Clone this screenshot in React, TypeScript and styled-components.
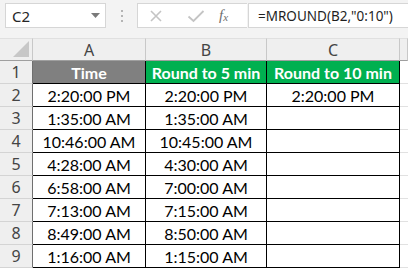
import React from 'react';
import styled, {createGlobalStyle} from "styled-components";

const GlobalStyle = createGlobalStyle`
    html, body {
        margin: 0;
        padding: 0;
        background: #ffffff;
        overflow: hidden;
    }
`

type Row = {
    time: string
    five: string
    ten: string
}

const rows: Row[] = [
    {time: '2:20:00 PM', five: '2:20:00 PM', ten: '2:20:00 PM'},
    {time: '1:35:00 AM', five: '1:35:00 AM', ten: ''},
    {time: '10:46:00 AM', five: '10:45:00 AM', ten: ''},
    {time: '4:28:00 AM', five: '4:30:00 AM', ten: ''},
    {time: '6:58:00 AM', five: '7:00:00 AM', ten: ''},
    {time: '7:13:00 AM', five: '7:15:00 AM', ten: ''},
    {time: '8:49:00 AM', five: '8:50:00 AM', ten: ''},
    {time: '1:16:00 AM', five: '1:15:00 AM', ten: ''},
]

export default function App() {
    return (
        <Sheet>
            <GlobalStyle/>
            <Toolbar>
                <NameBox>
                    <span>C2</span>
                    <svg width="9" height="5" viewBox="0 0 9 5">
                        <path d="M0 0 L9 0 L4.5 5 Z" fill="#7a7a7a"/>
                    </svg>
                </NameBox>
                <Grip>
                    <i/><i/><i/>
                </Grip>
                <Controls>
                    <svg width="14" height="14" viewBox="0 0 14 14">
                        <path d="M2 2 L12 12 M12 2 L2 12" stroke="#c4c4c4" strokeWidth="1.6"/>
                    </svg>
                    <svg width="18" height="14" viewBox="0 0 18 14">
                        <path d="M1.5 7.5 L6.5 12 L16.5 2" stroke="#c4c4c4" strokeWidth="1.8" fill="none"/>
                    </svg>
                    <Fx>f<sub>x</sub></Fx>
                </Controls>
                <FormulaInput>=MROUND(B2,"0:10")</FormulaInput>
            </Toolbar>
            <Grid>
                <Corner>
                    <svg width="16" height="16" viewBox="0 0 16 16">
                        <path d="M16 0 L16 16 L0 16 Z" fill="#c7c7c7"/>
                    </svg>
                </Corner>
                <ColHead>A</ColHead>
                <ColHead>B</ColHead>
                <ColHead>C</ColHead>
                <ColHead/>

                <RowHead>1</RowHead>
                <HeadCell $bg="#808080">Time</HeadCell>
                <HeadCell $bg="#00b050">Round to 5 min</HeadCell>
                <HeadCell $bg="#00b050">Round to 10 min</HeadCell>
                <Empty/>

                {rows.map((r, i) => (
                    <React.Fragment key={i}>
                        <RowHead>{i + 2}</RowHead>
                        <Cell>{r.time}</Cell>
                        <Cell>{r.five}</Cell>
                        <Cell>{r.ten}</Cell>
                        <Empty/>
                    </React.Fragment>
                ))}
            </Grid>
        </Sheet>
    );
}

const Sheet = styled.div`
    width: 408px;
    height: 272px;
    overflow: hidden;
    background: #ffffff;
`
const Toolbar = styled.div`
    height: 38px;
    box-sizing: border-box;
    padding: 3px 0 0 5px;
    background: #f3f3f3;
    display: flex;
    align-items: flex-start;
`
const NameBox = styled.div`
    width: 101px;
    height: 25px;
    box-sizing: border-box;
    background: #ffffff;
    border: 1px solid #d6d6d6;
    display: flex;
    align-items: center;
    justify-content: space-between;
    padding: 0 5px 0 6px;
    span {
        font-family: 'Noto Sans', sans-serif;
        font-size: 15px;
        color: #262626;
    }
`
const Grip = styled.div`
    width: 31px;
    height: 25px;
    display: flex;
    flex-direction: column;
    align-items: center;
    justify-content: center;
    gap: 3px;
    i {
        width: 2px;
        height: 2px;
        background: #b4b4b4;
    }
`
const Controls = styled.div`
    width: 110px;
    height: 25px;
    box-sizing: border-box;
    background: #ffffff;
    border: 1px solid #d6d6d6;
    border-right: none;
    display: flex;
    align-items: center;
    padding-left: 11px;
    svg:first-child {
        margin-right: 24px;
    }
    svg:nth-child(2) {
        margin-right: 14px;
    }
`
const Fx = styled.span`
    font-family: 'Liberation Serif', serif;
    font-style: italic;
    font-size: 15px;
    color: #6e6e6e;
    sub {
        font-size: 11px;
        vertical-align: -1px;
    }
`
const FormulaInput = styled.div`
    flex: 1;
    height: 25px;
    box-sizing: border-box;
    background: #ffffff;
    border: 1px solid #d6d6d6;
    border-right: none;
    margin-left: 1px;
    padding-left: 9px;
    display: flex;
    align-items: center;
    font-family: 'Noto Sans', sans-serif;
    font-size: 13.5px;
    color: #1f1f1f;
    white-space: nowrap;
`
const Grid = styled.div`
    display: grid;
    grid-template-columns: 33px 113px 121px 133px 1fr;
    grid-auto-rows: 23px;
`
const Corner = styled.div`
    background: #efefef;
    border-top: 1px solid #e0e0e0;
    border-right: 1px solid #c8c8c8;
    border-bottom: 1px solid #9f9f9f;
    box-sizing: border-box;
    display: flex;
    align-items: flex-end;
    justify-content: flex-end;
    padding: 0 3px 3px 0;
`
const ColHead = styled.div`
    background: #efefef;
    border-top: 1px solid #e0e0e0;
    border-right: 1px solid #c8c8c8;
    border-bottom: 1px solid #9f9f9f;
    box-sizing: border-box;
    display: flex;
    align-items: center;
    justify-content: center;
    font-family: 'Noto Sans', sans-serif;
    font-size: 16px;
    color: #444444;
`
const RowHead = styled.div`
    background: #efefef;
    border-right: 1px solid #6f6f6f;
    border-bottom: 1px solid #d4d4d4;
    box-sizing: border-box;
    display: flex;
    align-items: center;
    justify-content: center;
    font-family: 'Noto Sans', sans-serif;
    font-size: 16px;
    color: #444444;
`
const Cell = styled.div`
    border-right: 1px solid #000000;
    border-bottom: 1px solid #000000;
    box-sizing: border-box;
    display: flex;
    align-items: center;
    justify-content: center;
    font-family: 'Lato', sans-serif;
    font-size: 16px;
    color: #000000;
    white-space: nowrap;
`
const HeadCell = styled(Cell)<{ $bg: string }>`
    background: ${p => p.$bg};
    color: #ffffff;
    font-weight: 700;
`
const Empty = styled.div`
    border-bottom: 1px solid #e1e1e1;
    box-sizing: border-box;
`
